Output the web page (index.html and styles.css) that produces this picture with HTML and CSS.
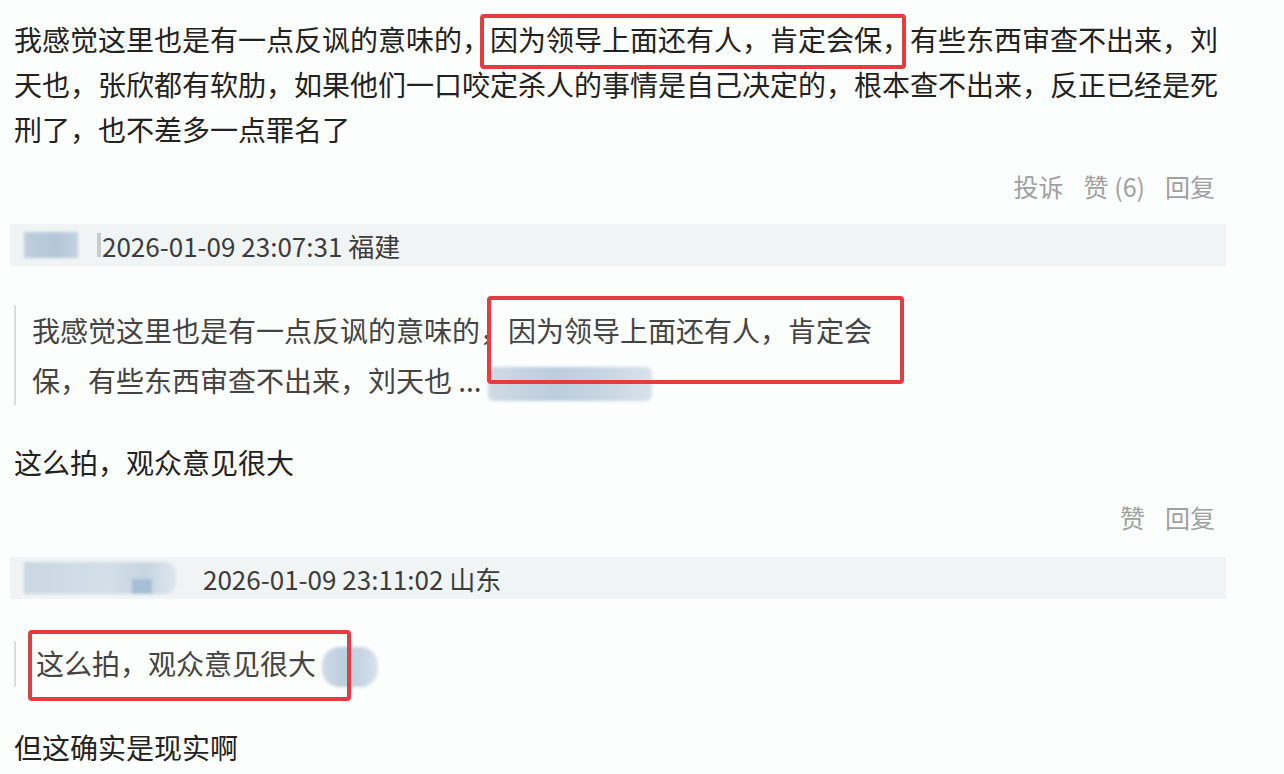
FILE: index.html
```html
<!DOCTYPE html>
<html lang="zh-CN">
<head>
    <meta charset="UTF-8">
    <title>评论</title>
    <link rel="stylesheet" href="styles.css">
</head>
<body>
    <div class="page">
        <p class="comment-text">我感觉这里也是有一点反讽的意味的，因为领导上面还有人，肯定会保，有些东西审查不出来，刘天也，张欣都有软肋，如果他们一口咬定杀人的事情是自己决定的，根本查不出来，反正已经是死刑了，也不差多一点罪名了</p>
        <div class="actions">
            <span>投诉</span>
            <span>赞 (6)</span>
            <span>回复</span>
        </div>

        <div class="meta-bar">
            <span class="blur-name short"></span>
            <span class="sliver"></span>
            <span class="meta-date">2026-01-09 23:07:31 福建</span>
        </div>

        <blockquote class="quote quote-long">
            我感觉这里也是有一点反讽的意味的，因为领导上面还有人，肯定会保，有些东西审查不出来，刘天也 ...<span class="blur-chip wide"></span>
        </blockquote>

        <p class="comment-text reply">这么拍，观众意见很大</p>
        <div class="actions">
            <span>赞</span>
            <span>回复</span>
        </div>

        <div class="meta-bar">
            <span class="blur-name long"><i></i></span>
            <span class="meta-date">2026-01-09 23:11:02 山东</span>
        </div>

        <blockquote class="quote quote-short">
            这么拍，观众意见很大 <span class="blur-chip small"></span>
        </blockquote>

        <p class="comment-text last">但这确实是现实啊</p>

        <!-- red annotation boxes drawn over the screenshot -->
        <div class="mark mark-one"></div>
        <div class="mark mark-two"></div>
        <div class="mark mark-three"></div>
    </div>
</body>
</html>
```

FILE: styles.css
```css
/* Global styles */
body {
    margin: 0;
    background-color: #fcfdfd;
    font-family: "Noto Sans CJK SC", "Noto Sans", sans-serif;
    color: #222;
    overflow: hidden;
}

.page {
    position: relative;
    width: 1204px;
    padding: 17px 0 0 14px;
}

.comment-text {
    margin: 0;
    font-size: 28px;
    line-height: 45px;
}

.comment-text.reply {
    margin-top: 35px;
}

.comment-text.last {
    margin-top: 38px;
}

/* like / reply row */
.actions {
    display: flex;
    justify-content: flex-end;
    gap: 20px;
    height: 40px;
    line-height: 40px;
    margin-top: 14px;
    padding-right: 3px;
    font-size: 25px;
    color: #a0a0a0;
}

.reply + .actions {
    margin-top: 12px;
}

/* user + time strip */
.meta-bar {
    display: flex;
    align-items: center;
    height: 42px;
    margin: 18px -8px 0 -4px;
    padding-left: 14px;
    background-color: #f0f4f4;
    font-size: 26px;
    color: #3c3c3c;
}

.reply + .actions + .meta-bar {
    margin-top: 20px;
}

.blur-name {
    display: inline-block;
    height: 26px;
    background: linear-gradient(90deg, #bfcfdd, #b3c6d8 60%, #c4d3e0);
    filter: blur(1.5px);
}

.blur-name.short {
    width: 54px;
    margin-right: 19px;
}

.blur-name.long {
    position: relative;
    width: 152px;
    height: 32px;
    margin-right: 27px;
    background: linear-gradient(90deg, #c9d7e3, #d3dee8 55%, #c7d5e2 80%, #dde6ee);
    border-radius: 0 12px 12px 0;
}

.blur-name.long i {
    position: absolute;
    left: 108px;
    top: 17px;
    width: 20px;
    height: 15px;
    background-color: #a7bfd5;
}

.sliver {
    display: inline-block;
    width: 4px;
    height: 24px;
    margin-right: 1px;
    background-color: #c8cccf;
}

/* quoted reply */
.quote {
    margin: 39px 0 0 0;
    padding-left: 16px;
    border-left: 2px solid #d9dcdf;
    font-size: 28px;
    line-height: 50px;
    color: #444;
    width: 842px;
}

.quote-short {
    margin-top: 42px;
    padding-left: 20px;
    line-height: 44px;
}

.blur-chip {
    display: inline-block;
    vertical-align: middle;
    background: linear-gradient(90deg, #cfdbe6, #bccddd 40%, #c7d6e3 70%, #d8e2eb);
    filter: blur(1.5px);
}

.blur-chip.wide {
    width: 164px;
    height: 34px;
    margin-left: 6px;
    border-radius: 6px;
}

.blur-chip.small {
    width: 56px;
    height: 40px;
    border-radius: 18px;
}

/* red highlight boxes */
.mark {
    position: absolute;
    border: 4px solid #e63b3f;
    border-radius: 4px;
    box-sizing: border-box;
}

.mark-one {
    left: 480px;
    top: 14px;
    width: 426px;
    height: 55px;
}

.mark-two {
    left: 487px;
    top: 296px;
    width: 417px;
    height: 88px;
}

.mark-three {
    left: 28px;
    top: 630px;
    width: 323px;
    height: 71px;
}
```
